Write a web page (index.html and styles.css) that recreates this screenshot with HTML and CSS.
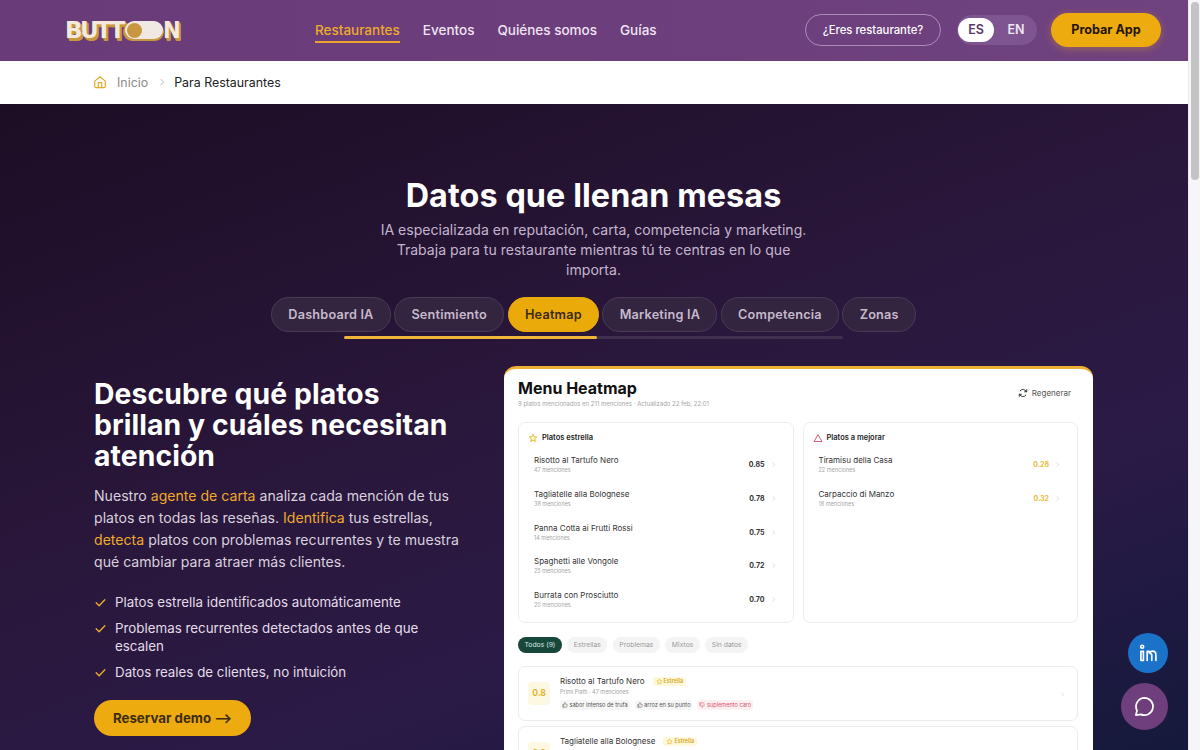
FILE: index.html
```html
<!DOCTYPE html>
<html lang="es">
<head>
<meta charset="utf-8">
<title>Para Restaurantes</title>
<link rel="stylesheet" href="styles.css">
</head>
<body>
<div class="page">
  <header class="topbar">
    <div class="logo"><span>BUTT</span><i class="toggle"><b></b></i><span>N</span></div>
    <nav class="nav">
      <a class="active">Restaurantes</a><a>Eventos</a><a>Quiénes somos</a><a>Guías</a>
    </nav>
    <div class="actions">
      <a class="ghost">¿Eres restaurante?</a>
      <div class="lang"><span class="on">ES</span><span>EN</span></div>
      <a class="try">Probar App</a>
    </div>
  </header>
  <div class="crumbs">
    <svg width="14" height="14" viewBox="0 0 24 24" fill="none" stroke="#e0a92a" stroke-width="2" stroke-linecap="round" stroke-linejoin="round"><path d="M3 10.500 12 3l9 7.500V20a1.500 1.500 0 0 1-1.500 1.500h-15A1.500 1.500 0 0 1 3 20z"/><path d="M9 21.500V13h6v8.500"/></svg>
    <a>Inicio</a>
    <svg width="10" height="10" viewBox="0 0 24 24" fill="none" stroke="#aaa" stroke-width="2"><path d="m9 5 7 7-7 7"/></svg>
    <span>Para Restaurantes</span>
  </div>
  <main class="hero">
    <h1>Datos que llenan mesas</h1>
    <p class="lead">IA especializada en reputación, carta, competencia y marketing. Trabaja para tu restaurante mientras tú te centras en lo que importa.</p>
    <div class="tabs">
      <a>Dashboard IA</a><a>Sentimiento</a><a class="current">Heatmap</a><a>Marketing IA</a><a>Competencia</a><a>Zonas</a>
    </div>
    <div class="progress"><i></i></div>
    <section class="split">
      <div class="copy">
        <h2>Descubre qué platos brillan y cuáles necesitan atención</h2>
        <p>Nuestro <em>agente de carta</em> analiza cada mención de tus platos en todas las reseñas. <em>Identifica</em> tus estrellas, <em>detecta</em> platos con problemas recurrentes y te muestra qué cambiar para atraer más clientes.</p>
        <ul>
          <li><svg viewBox="0 0 24 24"><path d="m4 12.500 5.500 5.500L20 7"/></svg>Platos estrella identificados automáticamente</li>
          <li><svg viewBox="0 0 24 24"><path d="m4 12.500 5.500 5.500L20 7"/></svg>Problemas recurrentes detectados antes de que escalen</li>
          <li><svg viewBox="0 0 24 24"><path d="m4 12.500 5.500 5.500L20 7"/></svg>Datos reales de clientes, no intuición</li>
        </ul>
        <a class="demo">Reservar demo ⟶</a>
      </div>
      <div class="shot">
        <div class="shot-head">
          <div>
            <h3>Menu Heatmap</h3>
            <small>9 platos mencionados en 211 menciones · Actualizado 22 feb, 22:01</small>
          </div>
          <span class="regen"><svg width="10" height="10" viewBox="0 0 24 24" fill="none" stroke="#333" stroke-width="2.400" stroke-linecap="round" stroke-linejoin="round"><path d="M21 4v5h-5"/><path d="M20 9a8.500 8.500 0 0 0-15-2"/><path d="M3 20v-5h5"/><path d="M4 15a8.500 8.500 0 0 0 15 2"/></svg>Regenerar</span>
        </div>
        <div class="boards">
          <div class="board">
            <h4><svg width="10" height="10" viewBox="0 0 24 24" fill="#fdf3c4" stroke="#e3b11e" stroke-width="2" stroke-linejoin="round"><path d="m12 3 2.800 5.800 6.200.9-4.500 4.400 1.100 6.300L12 17.400l-5.600 3 1.100-6.300L3 9.700l6.200-.9z"/></svg>Platos estrella</h4>
            <div class="dish"><div><b>Risotto al Tartufo Nero</b><small>47 menciones</small></div><strong>0.85</strong><svg class="chev" viewBox="0 0 24 24"><path d="m9 5 7 7-7 7"/></svg></div>
            <div class="dish"><div><b>Tagliatelle alla Bolognese</b><small>38 menciones</small></div><strong>0.78</strong><svg class="chev" viewBox="0 0 24 24"><path d="m9 5 7 7-7 7"/></svg></div>
            <div class="dish"><div><b>Panna Cotta ai Frutti Rossi</b><small>14 menciones</small></div><strong>0.75</strong><svg class="chev" viewBox="0 0 24 24"><path d="m9 5 7 7-7 7"/></svg></div>
            <div class="dish"><div><b>Spaghetti alle Vongole</b><small>25 menciones</small></div><strong>0.72</strong><svg class="chev" viewBox="0 0 24 24"><path d="m9 5 7 7-7 7"/></svg></div>
            <div class="dish"><div><b>Burrata con Prosciutto</b><small>20 menciones</small></div><strong>0.70</strong><svg class="chev" viewBox="0 0 24 24"><path d="m9 5 7 7-7 7"/></svg></div>
          </div>
          <div class="board">
            <h4><svg width="10" height="10" viewBox="0 0 24 24" fill="none" stroke="#c2405a" stroke-width="2" stroke-linejoin="round"><path d="M12 4 2.500 20.500h19z"/></svg>Platos a mejorar</h4>
            <div class="dish"><div><b>Tiramisu della Casa</b><small>22 menciones</small></div><strong class="warn">0.28</strong><svg class="chev" viewBox="0 0 24 24"><path d="m9 5 7 7-7 7"/></svg></div>
            <div class="dish"><div><b>Carpaccio di Manzo</b><small>18 menciones</small></div><strong class="warn">0.32</strong><svg class="chev" viewBox="0 0 24 24"><path d="m9 5 7 7-7 7"/></svg></div>
          </div>
        </div>
        <div class="filters"><span class="sel">Todos (9)</span><span>Estrellas</span><span>Problemas</span><span>Mixtos</span><span>Sin datos</span></div>
        <article class="item">
          <div class="score">0.8</div>
          <div class="info">
            <div class="line"><b>Risotto al Tartufo Nero</b><span class="badge"><svg width="7" height="7" viewBox="0 0 24 24" fill="none" stroke="#e3b11e" stroke-width="2"><path d="m12 3 2.800 5.800 6.200.9-4.500 4.400 1.100 6.300L12 17.400l-5.600 3 1.100-6.300L3 9.700l6.200-.9z"/></svg>Estrella</span></div>
            <small>Primi Piatti · 47 menciones</small>
            <div class="tags">
              <span><svg viewBox="0 0 24 24"><path d="M7 10v11H3V10zM7 10l4-8c2 0 3 1.500 2.500 3.500L13 9h6.500c1 0 2 1 1.500 2.500l-2 8c-.3 1-1 1.500-2 1.500H7"/></svg>sabor intenso de trufa</span>
              <span><svg viewBox="0 0 24 24"><path d="M7 10v11H3V10zM7 10l4-8c2 0 3 1.500 2.500 3.500L13 9h6.500c1 0 2 1 1.500 2.500l-2 8c-.3 1-1 1.500-2 1.500H7"/></svg>arroz en su punto</span>
              <span class="bad"><svg viewBox="0 0 24 24"><path d="M7 14V3H3v11zM7 14l4 8c2 0 3-1.500 2.500-3.500L13 15h6.500c1 0 2-1 1.500-2.500l-2-8C18.700 3.500 18 3 17 3H7"/></svg>suplemento caro</span>
            </div>
          </div>
          <svg class="chev" viewBox="0 0 24 24"><path d="m9 5 7 7-7 7"/></svg>
        </article>
        <article class="item">
          <div class="score">0.8</div>
          <div class="info">
            <div class="line"><b>Tagliatelle alla Bolognese</b><span class="badge"><svg width="7" height="7" viewBox="0 0 24 24" fill="none" stroke="#e3b11e" stroke-width="2"><path d="m12 3 2.800 5.800 6.200.9-4.500 4.400 1.100 6.300L12 17.400l-5.600 3 1.100-6.300L3 9.700l6.200-.9z"/></svg>Estrella</span></div>
          </div>
        </article>
      </div>
    </section>
  </main>
</div>
<aside class="scrollbar"><i></i></aside>
<a class="fab linkedin"><svg width="20" height="20" viewBox="0 0 24 24" fill="none" stroke="#fff" stroke-width="2" stroke-linecap="round" stroke-linejoin="round"><circle cx="5" cy="4.500" r="1.800"/><path d="M3.500 10h3v11h-3z"/><path d="M11 21V10h2.500v2c1-1.500 2.500-2.300 4-2.300 2.800 0 4 2 4 4.800V21"/><path d="M16.500 21v-6.500c0-1-.7-1.700-1.500-1.700"/></svg></a>
<a class="fab chat"><svg width="23" height="23" viewBox="0 0 24 24" fill="none" stroke="#fff" stroke-width="1.800" stroke-linejoin="round"><path d="M12 3a9 9 0 1 1-3.800 17.200L3 21l1.200-4.800A9 9 0 0 1 12 3z"/></svg></a>
</body>
</html>
```

FILE: styles.css
```css
* { box-sizing: border-box; }
html, body { margin: 0; height: 100%; overflow: hidden; }
body { display: flex; font-family: Inter, "Liberation Sans", sans-serif; background: #fff; }
a { display: inline-block; }
.page { width: 1188px; height: 750px; overflow: hidden; flex: none; }
.scrollbar { width: 12px; height: 750px; background: #f6f6f8; padding: 2px 2px 0; border-left: 1px solid #ececec; }
.scrollbar i { display: block; height: 178px; width: 8px; border-radius: 4px; background: #c4c4c4; }

.topbar { height: 61px; background: linear-gradient(90deg, #693b78, #6f4280); display: flex; align-items: center; padding: 0 27px 1px 65px; }
.logo { display: flex; align-items: center; width: 250px; font: 800 23px/1 "DejaVu Sans", sans-serif; letter-spacing: -2.600px; color: #f4eadc; text-shadow: 1px 1px 0 #c9973f, 2px 2px 0 #c9973f, 2px 3px 0 #c9973f; }
.toggle { display: flex; align-items: center; flex: none; width: 38px; height: 18px; margin-left: 2px; padding-left: 2px; background: #f0e8e2; border-radius: 9px; box-shadow: -2px 2px 0 #c9973f, 1px 2px 0 #c9973f; }
.toggle b { width: 15px; height: 15px; border-radius: 50%; background: #c9973f; }
.logo span:last-child { transform: scaleX(.92); transform-origin: left; }
.nav { display: flex; gap: 23px; font-size: 13.500px; font-weight: 500; color: #f0e5f3; }
.nav a { padding: 5px 0 3px; border-bottom: 2px solid transparent; }
.nav .active { color: #eeaa2c; border-color: #e9a42d; }
.actions { margin-left: auto; display: flex; align-items: center; }
.ghost { height: 32px; width: 136px; text-align: center; line-height: 30px; border: 1px solid #ab8cb6; border-radius: 16px; color: #fff; font-size: 11.300px; font-weight: 500; }
.lang { margin-left: 16px; width: 80px; height: 30px; border-radius: 15px; background: #7e5590; display: flex; align-items: center; padding: 0 1px; font-size: 12.500px; font-weight: 600; color: #f0e5f3; }
.lang span { width: 36px; height: 24px; line-height: 24px; text-align: center; }
.lang span:last-child { margin-left: 4px; }
.lang .on { background: #fff; color: #5a3a68; border-radius: 12px; }
.try { margin-left: 14px; width: 110px; height: 34px; border-radius: 17px; line-height: 34px; text-align: center; background: #edab10; color: #241408; font-size: 12.600px; font-weight: 700; box-shadow: 0 2px 8px rgba(237,171,16,.35); }

.crumbs { height: 43px; background: #fff; display: flex; align-items: center; padding: 0 0 1px 93px; font-size: 12.400px; color: #222; }
.crumbs a { color: #8a8a8a; margin: 0 9px 0 10px; }
.crumbs span { margin-left: 7px; }

.hero { height: 646px; overflow: hidden; padding: 76px 95px 0 94px; display: flex; flex-direction: column; align-items: center; background: linear-gradient(160deg, #1d0d24 0%, #2a173c 45%, #2a1a46 70%, #15193c 100%); color: #fff; }
h1 { margin: 0; font-size: 32.300px; line-height: 32px; font-weight: 700; letter-spacing: 0.100px; }
.lead { margin: 8px 0 0; width: 430px; text-align: center; font-size: 14.070px; line-height: 20px; color: #c3b5cd; }
.tabs { margin-top: 17px; display: flex; gap: 3.500px; }
.tabs a { height: 35px; line-height: 33px; padding: 0 16.200px; border: 1px solid #4a3a55; border-radius: 18px; background: #33243f; font-size: 12.700px; font-weight: 600; color: #c6b9cc; letter-spacing: 0.200px; }
.tabs .current { background: #eaaa09; border-color: #eaaa09; color: #3b2c12; }
.progress { margin-top: 4px; width: 499px; height: 3px; background: #40304d; border-radius: 2px; }
.progress i { display: block; width: 253px; height: 3px; background: #efb53a; border-radius: 2px; }

.split { align-self: stretch; margin-top: 27px; display: flex; justify-content: space-between; align-items: flex-start; }
.copy { width: 372px; padding-top: 13px; }
h2 { margin: 0; font-size: 28.300px; line-height: 31px; font-weight: 700; letter-spacing: 0.100px; }
.copy p { margin: 13px 0 0; font-size: 14.100px; line-height: 22px; color: #d9d0de; }
.copy em { font-style: normal; color: #eeaa2c; }
ul { list-style: none; margin: 21px 0 0; padding: 0; }
li { position: relative; padding-left: 21px; margin-bottom: 8.500px; font-size: 13.350px; line-height: 17.500px; color: #e4dce8; }
li svg { position: absolute; left: 0; top: 2px; width: 13px; height: 13px; fill: none; stroke: #eeaa2c; stroke-width: 2.500; stroke-linecap: round; stroke-linejoin: round; }
.demo { margin-top: 10.500px; width: 157px; height: 36px; line-height: 36px; text-align: center; border-radius: 18px; background: #edab10; color: #3c2d10; font-size: 13.300px; font-weight: 700; }

.shot { flex: none; width: 589px; height: 420px; background: #fff; border-top: 3px solid #edb030; border-radius: 12px 12px 0 0; padding: 9px 15px 0 14px; color: #1b1b1b; overflow: hidden; }
.shot-head { display: flex; justify-content: space-between; align-items: flex-start; }
h3 { margin: 0; font-size: 16px; line-height: 20px; font-weight: 700; color: #111; }
.shot small { display: block; font-size: 6px; color: #a5a5a5; }
.shot-head small { margin-top: 2px; }
.regen { display: flex; align-items: center; gap: 4px; margin: 10px 7px 0 0; font-size: 8px; color: #555; }
.boards { margin-top: 15px; display: flex; gap: 9px; }
.board { flex: 1; height: 201px; border: 1px solid #ececec; border-radius: 7px; padding: 10px 16px 0 9px; }
h4 { margin: 0 0 5px; display: flex; align-items: center; gap: 4px; font-size: 7.500px; line-height: 10px; font-weight: 600; color: #222; }
.dish { display: flex; align-items: center; height: 33.700px; padding-left: 6px; }
.dish div { flex: 1; }
.dish b { display: block; font-size: 8px; line-height: 10px; font-weight: 400; color: #333; }
.dish small { margin-top: 2px; font-size: 5.500px; line-height: 7px; }
.dish strong { font-size: 7px; font-weight: 700; color: #333; }
.dish .warn { color: #e8bb3a; }
.chev { width: 7px; height: 7px; margin-left: 5px; fill: none; stroke: #c8c8c8; stroke-width: 2; }
.filters { margin-top: 14px; display: flex; gap: 5.500px; }
.filters span { height: 16px; line-height: 16px; padding: 0 6.500px; border-radius: 8px; background: #f4f4f4; font-size: 6.800px; color: #9a9a9a; }
.filters .sel { background: #17473a; color: #dbe8e3; }
.item { margin-top: 5px; height: 55px; border: 1px solid #ececec; border-radius: 7px; padding: 9px 11px 0 9px; display: flex; align-items: flex-start; }
.filters + .item { margin-top: 13px; }
.score { margin-top: 6px; width: 22px; height: 23px; line-height: 23px; text-align: center; border-radius: 4px; background: #fdf8e2; color: #e0b32e; font-size: 8.500px; font-weight: 700; }
.info { flex: 1; margin-left: 10px; }
.line { display: flex; align-items: center; gap: 8px; }
.line b { font-size: 8px; font-weight: 400; color: #333; line-height: 10px; }
.badge { display: flex; align-items: center; gap: 1px; padding: 0 3px; height: 9px; background: #fdf8dc; color: #d9a81e; font-size: 5.500px; font-weight: 600; border-radius: 3px; }
.info small { margin-top: 2px; font-size: 5.500px; line-height: 8px; }
.tags { margin-top: 4px; display: flex; gap: 5px; }
.tags span { display: flex; align-items: center; gap: 1.500px; height: 10px; padding: 0 2px; background: #f6f6f6; border-radius: 3px; font-size: 5.600px; color: #555; }
.tags svg { width: 6px; height: 6px; fill: none; stroke: #555; stroke-width: 2; }
.tags .bad { background: #fdf0f2; color: #d8506c; }
.tags .bad svg { stroke: #d8506c; }
.item > .chev { align-self: center; margin-top: -8px; }

.fab { position: fixed; display: flex; align-items: center; justify-content: center; border-radius: 50%; }
.linkedin { left: 1128px; top: 633px; width: 40px; height: 40px; background: #1a73c8; }
.chat { left: 1121px; top: 683px; width: 47px; height: 47px; background: #6f3f7d; }
```
